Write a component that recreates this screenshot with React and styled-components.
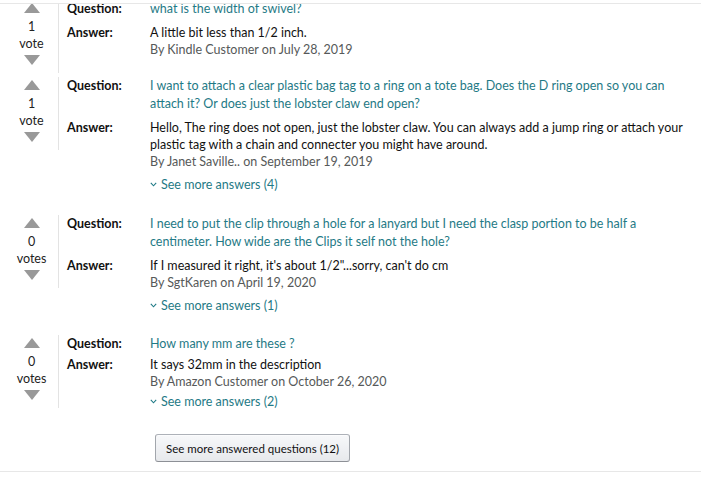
import React from "react";
import styled, { createGlobalStyle } from "styled-components";

const Global = createGlobalStyle`
  html, body { margin: 0; padding: 0; background: #fff; }
  body { font-family: Lato, "Open Sans", Arial, sans-serif; color: #0f1111; }
`;

const Panel = styled.div`
  width: 701px;
  height: 469px;
  margin-top: 3px;
  border-top: 1px solid #e7e7e7;
  border-bottom: 1px solid #e7e7e7;
  box-sizing: border-box;
  overflow: hidden;
`;

const List = styled.div`
  margin-top: -4px;
  display: flex;
  flex-direction: column;
`;

const Block = styled.div`
  display: flex;
  align-items: flex-start;
  margin-bottom: ${(p) => p.$after}px;
`;

const VoteCol = styled.div`
  width: 59px;
  height: 73px;
  box-sizing: border-box;
  border-right: 1px solid #e3e3e3;
  padding-top: 3px;
  display: flex;
  flex-direction: column;
  align-items: center;
  flex-shrink: 0;
`;

const Arrow = styled.span`
  width: 0;
  height: 0;
  margin-left: 5px;
  border-left: 8.5px solid transparent;
  border-right: 8.5px solid transparent;
  ${(p) =>
    p.$down
      ? "border-top: 10px solid #999; margin-top: 3px;"
      : "border-bottom: 10px solid #999; margin-bottom: 5px;"}
`;

const VoteText = styled.span`
  font-size: 12.5px;
  line-height: 17px;
  color: #222;
  margin-left: 5px;
`;

const Content = styled.div`
  padding-left: 8px;
  display: flex;
  flex-direction: column;
  flex: 1;
`;

const Row = styled.div`
  display: grid;
  grid-template-columns: 83px 1fr;
  margin-top: ${(p) => p.$gap || 0}px;
`;

const Label = styled.span`
  font-weight: 700;
  font-size: 12.5px;
  line-height: ${(p) => (p.$q ? "18px" : "17px")};
  color: #111;
`;

const QText = styled.span`
  font-size: 12.5px;
  line-height: 18px;
  color: #1f7a86;
`;

const AText = styled.div`
  font-size: 12.5px;
  line-height: 17px;
  color: #111;
`;

const ByLine = styled.div`
  font-size: 12.5px;
  line-height: 17px;
  color: #565959;
`;

const SeeMore = styled.div`
  margin-top: ${(p) => p.$gap}px;
  margin-left: 83px;
  font-size: 12.5px;
  line-height: 17px;
  color: #1f7a86;
  display: flex;
  align-items: center;
  gap: 4px;
`;

const Footer = styled.div`
  padding-left: 155px;
  padding-top: 4px;
`;

const Button = styled.button`
  height: 28px;
  padding: 0 10px;
  border: 1px solid #adb1b8;
  border-color: #adb1b8 #a2a6ac #8d9096;
  border-radius: 3px;
  background: linear-gradient(#f7f8fa, #e7e9ec);
  box-shadow: 0 1px 0 rgba(255, 255, 255, 0.6) inset;
  font-family: Lato, "Open Sans", Arial, sans-serif;
  font-size: 11.5px;
  color: #111;
`;

const Chevron = () => (
  <svg width="7" height="5" viewBox="0 0 7 5">
    <path d="M0.8 0.8 L3.5 3.8 L6.2 0.8" fill="none" stroke="#1f7a86" strokeWidth="1.1" />
  </svg>
);

const data = [
  {
    votes: 1,
    q: ["what is the width of swivel?"],
    a: ["A little bit less than 1/2 inch."],
    by: "By Kindle Customer on July 28, 2019",
    after: 4,
    aGap: 6,
  },
  {
    votes: 1,
    q: [
      "I want to attach a clear plastic bag tag to a ring on a tote bag. Does the D ring open so you can",
      "attach it? Or does just the lobster claw end open?",
    ],
    a: [
      "Hello, The ring does not open, just the lobster claw. You can always add a jump ring or attach your",
      "plastic tag with a chain and connecter you might have around.",
    ],
    by: "By Janet Saville.. on September 19, 2019",
    more: 4,
    after: 22,
    aGap: 6,
    mGap: 6,
  },
  {
    votes: 0,
    q: [
      "I need to put the clip through a hole for a lanyard but I need the clasp portion to be half a",
      "centimeter. How wide are the Clips it self not the hole?",
    ],
    a: ["If I measured it right, it's about 1/2\"...sorry, can't do cm"],
    by: "By SgtKaren on April 19, 2020",
    more: 1,
    after: 21,
    aGap: 6,
    mGap: 6,
  },
  {
    votes: 0,
    q: ["How many mm are these ?"],
    a: ["It says 32mm in the description"],
    by: "By Amazon Customer on October 26, 2020",
    more: 2,
    after: 20,
    aGap: 3,
    mGap: 3,
  },
];

const Lines = ({ lines }) =>
  lines.map((l, i) => (
    <React.Fragment key={i}>
      {l}
      {i < lines.length - 1 && <br />}
    </React.Fragment>
  ));

export default function App() {
  return (
    <>
      <Global />
      <Panel>
        <List>
          {data.map((d, i) => (
            <Block key={i} $after={d.after}>
              <VoteCol>
                <Arrow />
                <VoteText>{d.votes}</VoteText>
                <VoteText>{d.votes === 1 ? "vote" : "votes"}</VoteText>
                <Arrow $down />
              </VoteCol>
              <Content>
                <Row>
                  <Label $q>Question:</Label>
                  <QText>
                    <Lines lines={d.q} />
                  </QText>
                </Row>
                <Row $gap={d.aGap}>
                  <Label>Answer:</Label>
                  <div>
                    <AText>
                      <Lines lines={d.a} />
                    </AText>
                    <ByLine>{d.by}</ByLine>
                  </div>
                </Row>
                {d.more && (
                  <SeeMore $gap={d.mGap}>
                    <Chevron />
                    See more answers ({d.more})
                  </SeeMore>
                )}
              </Content>
            </Block>
          ))}
        </List>
        <Footer>
          <Button>See more answered questions (12)</Button>
        </Footer>
      </Panel>
    </>
  );
}
